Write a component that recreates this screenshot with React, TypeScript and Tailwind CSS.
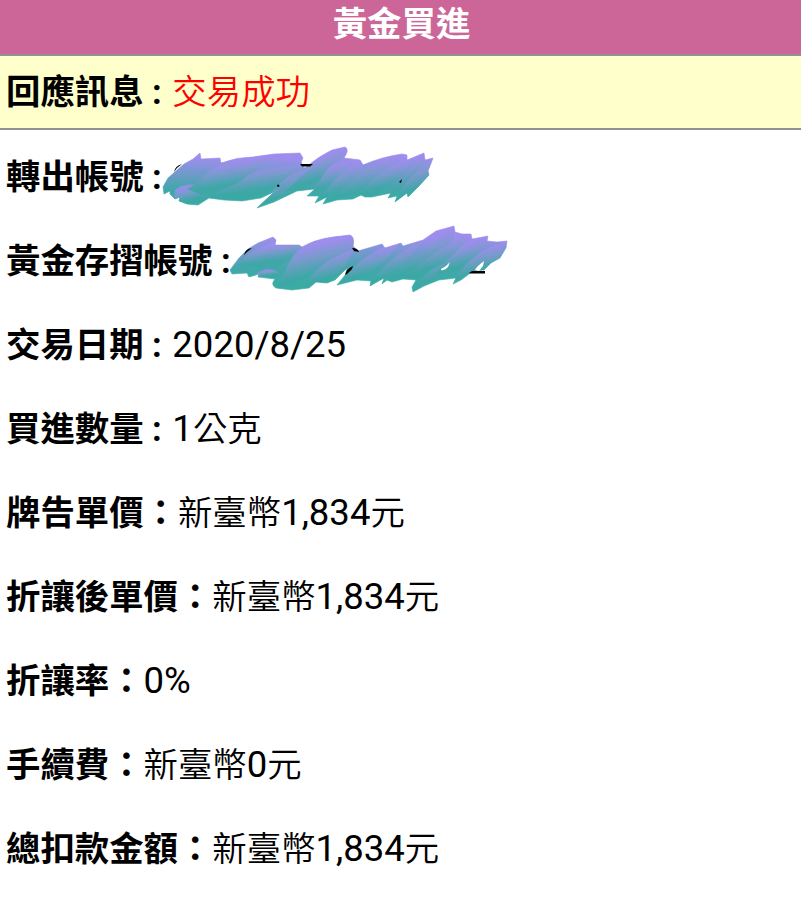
import type { ReactNode } from 'react'

interface Row {
  label: string
  value: ReactNode
}

// Latin digits run a little larger than the Chinese glyphs around them
function Num({ children }: { children: ReactNode }) {
  return <span className="text-[36.5px] font-normal">{children}</span>
}

const rows: Row[] = [
  { label: '交易日期 : ', value: <Num>2020/8/25</Num> },
  { label: '買進數量 : ', value: <><Num>1</Num>公克</> },
  { label: '牌告單價：', value: <>新臺幣<Num>1,834</Num>元</> },
  { label: '折讓後單價：', value: <>新臺幣<Num>1,834</Num>元</> },
  { label: '折讓率：', value: <Num>0%</Num> },
  { label: '手續費：', value: <>新臺幣<Num>0</Num>元</> },
  { label: '總扣款金額：', value: <>新臺幣<Num>1,834</Num>元</> },
]

interface ScribbleProps {
  id: string
  outline: string
  lobes: string[]
  digits: string
  gaps?: string
  className: string
}

// Brush marks over an account number, with slivers of the digits showing
function Scribble({ id, outline, lobes, digits, gaps, className }: ScribbleProps) {
  return (
    <svg className={className} width="290" height="80" viewBox="0 0 290 80" fill="none" aria-hidden="true">
      <defs>
        <linearGradient id={id} x1="0" y1="14" x2="0" y2="60" gradientUnits="userSpaceOnUse">
          <stop offset="0.1" stopColor="#9d8dec" />
          <stop offset="0.75" stopColor="#42a7ab" />
          <stop offset="1" stopColor="#3aaca4" />
        </linearGradient>
        <linearGradient id={`${id}-lobe`} x1="0.35" y1="0.1" x2="0.65" y2="0.9">
          <stop offset="0.15" stopColor="#a28cf0" />
          <stop offset="0.4" stopColor="#7f9ad0" />
          <stop offset="0.75" stopColor="#3ea8a6" />
        </linearGradient>
        <clipPath id={`${id}-clip`}><path d={outline} /></clipPath>
        <filter id={`${id}-soft`}><feGaussianBlur stdDeviation="0.7" /></filter>
      </defs>
      <path d={outline} fill={`url(#${id})`} stroke={`url(#${id})`} strokeWidth="0.6" strokeLinejoin="round" />
      <g clipPath={`url(#${id}-clip)`}>
        <g filter={`url(#${id}-soft)`} fill={`url(#${id}-lobe)`} opacity="0.8">
          {lobes.map(d => <path key={d} d={d} />)}
        </g>
      </g>
      {gaps && <path d={gaps} fill="#fff" />}
      <path d={digits} fill="#000" />
    </svg>
  )
}

export default function App() {
  return (
    <main className="h-[900px] w-[801px] overflow-hidden bg-white font-[Roboto,'Noto_Sans_CJK_TC',sans-serif] text-[34.4px] font-[350] text-black">
      <h1 className="flex h-[54px] items-center justify-center bg-[#cc6699] pb-[5px] pl-[2px] font-bold text-white">黃金買進</h1>
      <div className="flex h-[76px] items-center border-y-2 border-[#929292] bg-[#ffffcc] pt-px pl-[6px] whitespace-pre">
        <b className="mr-[2px]">回應訊息 : </b><span className="text-[#f00]">交易成功</span>
      </div>
      <div className="pt-[5px] leading-[84px]">
        <div className="relative h-[84px] pl-[6px] whitespace-pre">
          <b>轉出帳號 : </b>
          <Scribble
            id="from"
            className="absolute top-[5px] left-[155px]"
            outline="M8 47L13 38L29 24L38 19L45 13L46 19L65 18L66 23Q82 17 98 17L119 14L145 13L148 18Q144 25 150 28Q164 16 177 10L190 7Q195 9 189 18L205 20L208 25Q226 17 247 14L252 15L252 20L269 13L270 20L278 18L273 31L274 35L265 45L253 57L252 53L240 62L242 56L233 58L236 53L217 57L210 57L206 55L198 59L182 60L168 64L172 57L160 63L164 56L152 56L160 49L142 51L119 62L102 68L118 53L127 48L106 58L87 61L69 60L54 58L43 65L32 64L24 61L25 57L20 59L15 54L15 51L9 54Z"
            lobes={[
              'M20 50C30 42 45 43 54 51L48 61L36 65L19 62Z',
              'M32 49C46 43 52 28 68 24L100 16L121 15C105 27 91 36 76 47L47 55Z',
              'M54 58C69 44 78 50 92 36C108 25 130 31 151 20L142 38C130 48 108 56 86 60Z',
              'M101 68C120 47 132 33 151 29L165 22L158 41C144 50 124 58 101 68Z',
              'M130 52C146 37 158 22 190 8L190 15L166 39L150 50Z',
              'M155 52C170 38 164 35 179 23L204 19L180 42L160 54Z',
              'M161 62C174 48 181 34 204 20L218 24L194 44L172 57Z',
              'M170 63C190 50 199 34 222 22L246 15L225 37L201 53Z',
              'M202 57C215 40 231 26 251 19L257 22L237 44L218 56Z',
              'M232 58C244 39 255 29 269 14L270 24L256 40Z',
              'M240 61C250 41 259 32 279 18L274 36L253 57Z',
            ]}
            digits="M19 32Q20 26 27 24L22 28Z M145 24H158L155 26.5H147Z M122 45L124 44.5L124.5 46.5L122.5 47Z M244 42L247 39L246 43Z"
          />
        </div>
        <div className="relative h-[84px] pl-[6px] whitespace-pre">
          <b>黃金存摺帳號 : </b>
          <Scribble
            id="gold"
            className="absolute top-px left-[225px]"
            outline="M5 50L14 38L23 29L33 23L48 17L51 20L50 25L74 25L77 27Q91 19 108 17L125 15Q130 17 128 26L133 31L157 24L160 28L176 23L178 26L198 20L211 11L229 6L230 12L237 14L246 14L247 19L263 16L262 21L272 22L282 21L281 28L275 38L266 43L259 50L248 51L236 60L228 64L231 58L214 60L199 66L188 72L187 67L191 60L178 59L167 62L162 60L157 64L159 58L145 66L146 61L132 60L112 65L121 54L122 48L110 60L102 63L91 62L84 68L67 70L51 68Q45 65 50 59L33 57L34 54L24 57L22 53L7 54Z"
            lobes={[
              'M12 43C26 31 41 24 52 21L75 26L65 40L50 48L12 46Z',
              'M29 56C36 48 48 47 54 53L50 58Z',
              'M49 62C65 54 60 39 78 27L104 16L128 15L129 25L111 39L75 61L55 69Z',
              'M78 68C88 51 100 39 129 29L118 49L104 62Z',
              'M115 64C129 44 142 35 160 26L174 25L157 43L133 59Z',
              'M143 65C156 48 173 31 198 21L185 37L163 57Z',
              'M157 63C173 52 180 38 198 33L211 20L229 8L229 19L204 43L181 58Z',
              'M180 59C196 40 217 27 242 14L242 22L217 43L195 58Z',
              'M187 70C198 55 206 48 219 44L241 22L253 21L230 49L204 62Z',
              'M209 56C225 35 241 26 262 18L252 35L232 50Z',
              'M227 63C240 43 254 28 281 22L274 38L250 49Z',
            ]}
            digits="M19 35Q20 29 27 28L22 32Z M127 28Q133 28 134 32L129 31Z M120 55Q121 49 128 46L127 49L122 54Z M244 53L247 51H260V53.5H245Z"
            gaps="M216 49Q222 46 225 42L223 47Q220 51 216 50Z M250 50Q252 46 259 41L258 46L254 51Z"
          />
        </div>
        {rows.map(row => (
          <div key={row.label} className="h-[84px] pl-[6px] whitespace-pre">
            <b className={row.label.endsWith(' ') ? 'mr-[2px]' : ''}>{row.label}</b>
            <span>{row.value}</span>
          </div>
        ))}
      </div>
    </main>
  )
}
